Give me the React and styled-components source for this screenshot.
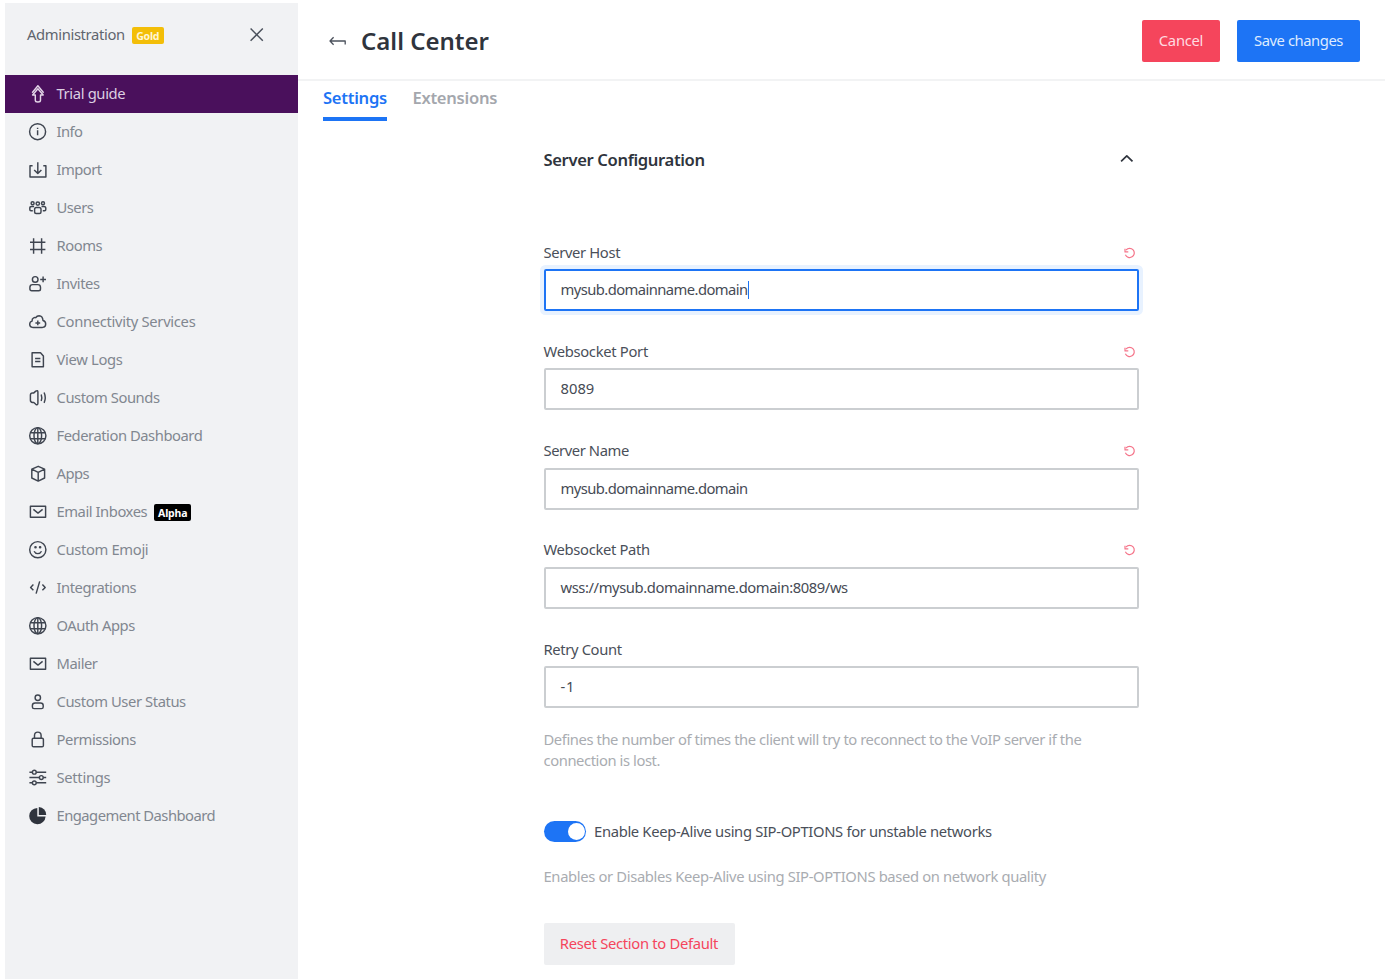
import React from 'react';
import styled, { createGlobalStyle } from 'styled-components';

const GlobalStyle = createGlobalStyle`
  *, *::before, *::after { box-sizing: border-box; }
  body { margin: 0; background: #fff; }
  body, button, input { font-family: 'Noto Sans', 'Open Sans', sans-serif; }
`;

const Page = styled.div`
  display: flex;
  width: 1396px;
  height: 980px;
  padding: 3px 11px 1px 5px;
  overflow: hidden;
  background: #fff;
  color: #2f343d;
  font-size: 14.78px;
  line-height: 21px;
`;

const Sidebar = styled.aside`
  display: flex;
  flex-direction: column;
  flex: none;
  width: 292.5px;
  background: #f1f2f4;
`;

const SidebarHeader = styled.header`
  display: flex;
  align-items: center;
  height: 72px;
  padding: 0 31px 8px 22px;
  color: #5f656e;
`;

const SidebarTitle = styled.span`
  padding-bottom: 2px;
  letter-spacing: -0.36px;
`;

const Badge = styled.span`
  display: inline-flex;
  align-items: center;
  justify-content: center;
  width: ${(p) => p.$width}px;
  height: 17px;
  margin-left: 7px;
  padding-top: 2px;
  border-radius: 2px;
  background: ${(p) => p.$bg};
  color: ${(p) => p.$color};
  font-size: 10.5px;
  font-weight: 700;
  line-height: 15px;
  letter-spacing: -0.2px;
`;

const IconButton = styled.button`
  display: flex;
  padding: 0;
  border: 0;
  background: none;
  color: #4b515c;
`;

const CloseButton = styled(IconButton)`
  margin-left: auto;
`;

const NavItem = styled.a`
  display: flex;
  align-items: center;
  flex: none;
  height: 38px;
  padding-left: 23px;
  background: ${(p) => (p.$active ? '#4a105c' : 'transparent')};
  color: ${(p) => (p.$active ? '#dccfe1' : '#818790')};
  svg {
    margin-right: 8.5px;
    color: ${(p) => (p.$active ? '#e3d5e8' : '#3f4550')};
  }
`;

const NavLabel = styled.span`
  padding-bottom: 2px;
  white-space: nowrap;
  letter-spacing: ${(p) => p.$tracking}px;
`;

const Main = styled.main`
  display: flex;
  flex-direction: column;
  flex: 1;
  min-width: 0;
`;

const PageHeader = styled.header`
  display: flex;
  align-items: center;
  flex: none;
  height: 78px;
  padding: 0 25px 0 30.5px;
  border-bottom: 2px solid #f2f3f4;
`;

const PageTitle = styled.h1`
  flex: 1;
  margin: 0 0 0 13px;
  font-size: 24px;
  font-weight: 600;
  line-height: 34px;
`;

const Button = styled.button`
  width: ${(p) => p.$width}px;
  height: 42px;
  padding: 0 0 1px;
  border: 0;
  border-radius: 2px;
  background: ${(p) => p.$bg};
  color: ${(p) => p.$color};
  font-size: 14.78px;
  line-height: 21px;
  letter-spacing: ${(p) => p.$tracking}px;
  white-space: nowrap;
`;

const ButtonGroup = styled.div`
  display: flex;
  gap: 17px;
`;

const Tabs = styled.nav`
  display: flex;
  flex: none;
  gap: 25.5px;
  height: 40px;
  padding-left: 25.5px;
`;

const Tab = styled.a`
  height: 40px;
  padding-top: 4px;
  border-bottom: 4px solid ${(p) => (p.$active ? '#1d74f5' : 'transparent')};
  color: ${(p) => (p.$active ? '#1d74f5' : '#a4a7ad')};
  font-size: 16.6px;
  font-weight: 600;
  line-height: 25px;
  letter-spacing: -0.28px;
`;

const Section = styled.section`
  display: flex;
  flex-direction: column;
  width: 595.5px;
  margin-left: 246px;
`;

const SectionHeader = styled.header`
  display: flex;
  align-items: center;
  justify-content: space-between;
  height: 42px;
  margin: 17px 0 62px;
  padding-right: 2px;
`;

const SectionTitle = styled.h2`
  margin: 0;
  font-size: 16.6px;
  font-weight: 600;
  line-height: 25px;
  letter-spacing: -0.36px;
`;

const Field = styled.div`
  display: flex;
  flex-direction: column;
  height: 99.25px;
`;

const LabelRow = styled.div`
  display: flex;
  align-items: center;
  justify-content: space-between;
  height: 21px;
  margin-bottom: 6px;
  padding-right: 2px;
`;

const Label = styled.label`
  padding-bottom: 1px;
  color: #4a4f59;
  letter-spacing: ${(p) => p.$tracking}px;
`;

const InputBox = styled.div`
  display: flex;
  align-items: center;
  flex: none;
  height: 42px;
  padding: 0 0 1px 15px;
  border: 2px solid ${(p) => (p.$focused ? '#1d74f5' : '#cbced1')};
  border-radius: 2px;
  box-shadow: ${(p) => (p.$focused ? '0 0 0 4px #e8f2ff' : 'none')};
  color: #464b55;
  letter-spacing: ${(p) => p.$tracking}px;
`;

const Caret = styled.span`
  width: 1px;
  height: 18px;
  background: #1d74f5;
`;

const Hint = styled.p`
  margin: 0;
  color: #a9acb1;
  letter-spacing: -0.35px;
`;

const RetryHint = styled(Hint)`
  width: 560px;
  margin-top: -9px;
  letter-spacing: -0.42px;
`;

const ToggleRow = styled.div`
  display: flex;
  align-items: center;
  height: 21px;
  margin: 50px 0 24px;
`;

const Toggle = styled.span`
  display: flex;
  justify-content: flex-end;
  width: 42.5px;
  height: 21px;
  margin-right: 8px;
  padding: 2px 1.5px;
  border-radius: 11px;
  background: #1d74f5;
`;

const Knob = styled.span`
  width: 17px;
  height: 17px;
  border-radius: 50%;
  background: #fff;
`;

const ResetSection = styled(Button)`
  margin-top: 36px;
`;

const shapes = {
  trial: (
    <>
      <path d="M4.600 9 10.300 2l5.700 7" />
      <path d="M10.300 5 5 11.300h2.700v5.200q0 1.800 2.600 1.800t2.600-1.800v-5.200h2.700z" />
    </>
  ),
  info: (
    <>
      <circle cx="10" cy="10" r="8" />
      <path d="M10 8.500v5M10 6v1.300" />
    </>
  ),
  import: <path d="M5 6H2.400v11.200h15.900V6h-2.600M10.200 2.600v11M6.600 10.200l3.600 3.600 3.600-3.600" />,
  users: (
    <>
      <circle cx="5" cy="5.600" r="1.500" />
      <circle cx="10.200" cy="5.900" r="1.700" />
      <circle cx="15.400" cy="5.600" r="1.500" />
      <path d="M7 11.500q0-1.800 1.800-1.800h2.800q1.800 0 1.800 1.800v2.700q0 1.500-1.500 1.500H8.500Q7 15.700 7 14.200zM6.500 8.700H4q-1.800 0-1.800 1.800v1.300q0 1.200 1.200 1.200h1.800M13.900 8.700h2.500q1.800 0 1.800 1.800v1.300q0 1.200-1.200 1.200h-1.800" />
    </>
  ),
  rooms: <path d="M6 2.500v15.500M14 2.500v15.500M2.400 6.600h15.400M2.400 13.800h15.400" />,
  invites: (
    <>
      <circle cx="7.600" cy="5.700" r="2.800" />
      <path d="M5 10.900h5.200q2.700 0 2.700 2.700v1.600q0 1.800-1.800 1.800h-7q-1.800 0-1.800-1.800v-1.600q0-2.700 2.700-2.700zM15.500 2.800v5.800M12.600 5.700h5.800" />
    </>
  ),
  cloud: (
    <path d="M5 15.700q-2.900-.2-2.900-3.200 0-2.500 2.400-3.100-.3-2.400 1.500-3.300 1-.6 2.200-.1Q9.300 4 11.500 4q3.600.2 3.900 4.800 2.700.8 2.700 3.500 0 3.200-3.100 3.400zM10.200 8.800v4.800M7.800 11.200h4.800" />
  ),
  logs: <path d="M4.500 3h8.400l2.900 3.200v10.900H4.500zM7.500 8.700h5.300M7.500 11.700h5.300" />,
  sound: (
    <path d="M6.200 5.200 8.200 3.400Q10.300 2.200 10.300 4.400v11.200q0 2.200-2.100 1L6.200 14.800H5q-2.200-.2-2.200-2.200V7.400q0-2 2.200-2.200zM13.600 6.700q1.200 3.300 0 6.600M16.500 4.800q2.300 5.200 0 10.400" />
  ),
  globe: (
    <>
      <circle cx="10.200" cy="10" r="8.100" />
      <ellipse cx="10.200" cy="10" rx="3.800" ry="8.100" />
      <path d="M10.200 2v16M2.800 7h14.800M2.800 13h14.800" />
    </>
  ),
  apps: <path d="M10.600 2.600 17 5.500v8.800l-6.400 3.100-6.400-3.100V5.500zM4.200 5.500l6.400 3.100L17 5.500M10.600 8.600v8.800" />,
  mail: <path d="M2.800 4.500H18v11H2.800zM5.800 7.700l4.600 3.700L15 7.700" />,
  emoji: (
    <>
      <circle cx="10.200" cy="10" r="8.100" />
      <path d="M6.500 11.500q1.200 2.400 3.700 2.400t3.700-2.400" />
      <circle cx="7.900" cy="7.500" r=".6" fill="currentColor" />
      <circle cx="12.500" cy="7.500" r=".6" fill="currentColor" />
    </>
  ),
  code: <path d="M5.800 6.800 3 9.700l2.800 2.900M14.800 6.800l2.800 2.900-2.800 2.900M12.100 3.700 8.500 15.900" />,
  user: (
    <>
      <circle cx="10.200" cy="6" r="2.700" />
      <path d="M7.500 11.300h5.400q2.700 0 2.700 2.600v1.300q0 1.700-1.700 1.700H6.500q-1.700 0-1.700-1.700v-1.300q0-2.600 2.700-2.600z" />
    </>
  ),
  lock: (
    <>
      <rect x="4.600" y="8.500" width="11.200" height="8.500" rx="1.300" />
      <path d="M6.900 8.500V5.700q0-3.300 3.300-3.300t3.300 3.300v2.800" />
    </>
  ),
  sliders: (
    <>
      <path d="M1.800 4.500h3M8.600 4.500h10M1.800 9.800h10M15.600 9.800h3M1.800 15.100h3M8.600 15.100h10" />
      <circle cx="6.700" cy="4.500" r="1.900" />
      <circle cx="13.700" cy="9.800" r="1.900" />
      <circle cx="6.700" cy="15.100" r="1.900" />
    </>
  ),
  pie: (
    <g fill="#2f343d" stroke="none">
      <path d="M9.700 2.200v8.600h8.300A8.200 8.200 0 1 1 9.700 2.200z" />
      <path d="M11.200 1.300a7.600 7.600 0 0 1 7.400 8h-7.400z" />
    </g>
  ),
  close: <path d="M4 3.900l12.200 12.200M16.200 3.900 4 16.100" />,
  back: <path d="M6 6.600 2.400 10.300 6 14M2.400 10.300h15.200v3.600" />,
  up: <path d="m4.500 12.700 5.700-5.600 5.700 5.600" strokeWidth="1.700" />,
  reset: (
    <>
      <path d="M6.500 7.300A4.600 4.600 0 1 1 5.800 12" />
      <path d="M5.400 6v3.200h3.300" />
    </>
  ),
};

const Icon = ({ name, weight = 1.45 }) => (
  <svg width="20" height="20" viewBox="0.4 0.3 20 20" fill="none" stroke="currentColor" strokeWidth={weight} strokeLinejoin="round">
    {shapes[name]}
  </svg>
);

const ResetIcon = styled.span`
  display: flex;
  width: 14px;
  justify-content: center;
  color: #f5758a;
  svg { flex: none; }
`;

const navItems = [
  { icon: 'trial', label: 'Trial guide', tracking: -0.36, active: true },
  { icon: 'info', label: 'Info', tracking: -0.55 },
  { icon: 'import', label: 'Import', tracking: -0.55 },
  { icon: 'users', label: 'Users', tracking: -0.5 },
  { icon: 'rooms', label: 'Rooms', tracking: -0.45 },
  { icon: 'invites', label: 'Invites', tracking: -0.45 },
  { icon: 'cloud', label: 'Connectivity Services', tracking: -0.31 },
  { icon: 'logs', label: 'View Logs', tracking: -0.32 },
  { icon: 'sound', label: 'Custom Sounds', tracking: -0.45 },
  { icon: 'globe', label: 'Federation Dashboard', tracking: -0.46 },
  { icon: 'apps', label: 'Apps', tracking: -0.5 },
  { icon: 'mail', label: 'Email Inboxes', tracking: -0.45, badge: 'Alpha' },
  { icon: 'emoji', label: 'Custom Emoji', tracking: -0.35 },
  { icon: 'code', label: 'Integrations', tracking: -0.46 },
  { icon: 'globe', label: 'OAuth Apps', tracking: -0.45 },
  { icon: 'mail', label: 'Mailer', tracking: -0.45 },
  { icon: 'user', label: 'Custom User Status', tracking: -0.42 },
  { icon: 'lock', label: 'Permissions', tracking: -0.42 },
  { icon: 'sliders', label: 'Settings', tracking: -0.3 },
  { icon: 'pie', label: 'Engagement Dashboard', tracking: -0.52 },
];

const fields = [
  { label: 'Server Host', labelTracking: -0.36, value: 'mysub.domainname.domain', tracking: -0.57, focused: true, reset: true },
  { label: 'Websocket Port', labelTracking: -0.3, value: '8089', tracking: 0, reset: true },
  { label: 'Server Name', labelTracking: -0.42, value: 'mysub.domainname.domain', tracking: -0.57, reset: true },
  { label: 'Websocket Path', labelTracking: -0.34, value: 'wss://mysub.domainname.domain:8089/ws', tracking: -0.42, reset: true },
  { label: 'Retry Count', labelTracking: -0.36, value: '-1', tracking: 0.8 },
];

export default function App() {
  return (
    <Page>
      <GlobalStyle />
      <Sidebar>
        <SidebarHeader>
          <SidebarTitle>Administration</SidebarTitle>
          <Badge $width={32} $bg="#f3be08" $color="#fff6d6">Gold</Badge>
          <CloseButton aria-label="Close"><Icon name="close" /></CloseButton>
        </SidebarHeader>
        {navItems.map((item) => (
          <NavItem key={item.label} $active={item.active}>
            <Icon name={item.icon} />
            <NavLabel $tracking={item.tracking}>{item.label}</NavLabel>
            {item.badge && <Badge $width={37} $bg="#000" $color="#fff">{item.badge}</Badge>}
          </NavItem>
        ))}
      </Sidebar>
      <Main>
        <PageHeader>
          <IconButton aria-label="Back"><Icon name="back" weight={1.3} /></IconButton>
          <PageTitle>Call Center</PageTitle>
          <ButtonGroup>
            <Button $width={78} $bg="#f5455c" $color="#ffdbe0" $tracking={-0.27}>Cancel</Button>
            <Button $width={123} $bg="#1d74f5" $color="#deebff" $tracking={-0.43}>Save changes</Button>
          </ButtonGroup>
        </PageHeader>
        <Tabs>
          <Tab $active>Settings</Tab>
          <Tab>Extensions</Tab>
        </Tabs>
        <Section>
          <SectionHeader>
            <SectionTitle>Server Configuration</SectionTitle>
            <Icon name="up" />
          </SectionHeader>
          {fields.map((field) => (
            <Field key={field.label}>
              <LabelRow>
                <Label $tracking={field.labelTracking}>{field.label}</Label>
                {field.reset && <ResetIcon><Icon name="reset" weight={1.2} /></ResetIcon>}
              </LabelRow>
              <InputBox $focused={field.focused} $tracking={field.tracking}>
                {field.value}
                {field.focused && <Caret />}
              </InputBox>
            </Field>
          ))}
          <RetryHint>
            Defines the number of times the client will try to reconnect to the VoIP server if the connection is lost.
          </RetryHint>
          <ToggleRow>
            <Toggle><Knob /></Toggle>
            <Label $tracking={-0.33}>Enable Keep-Alive using SIP-OPTIONS for unstable networks</Label>
          </ToggleRow>
          <Hint>Enables or Disables Keep-Alive using SIP-OPTIONS based on network quality</Hint>
          <ResetSection $width={191} $bg="#eeeff1" $color="#f5455c" $tracking={-0.3}>Reset Section to Default</ResetSection>
        </Section>
      </Main>
    </Page>
  );
}
